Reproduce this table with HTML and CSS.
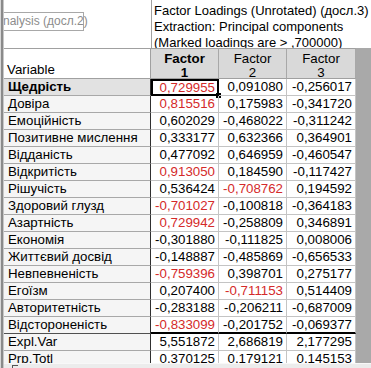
FILE: index.html
```html
<!DOCTYPE html>
<html>
<head>
<meta charset="utf-8">
<link rel="stylesheet" href="styles.css">
</head>
<body>
<div class="window">
  <div class="frame-left"></div>
  <div class="main">
    <div class="sheet">
      <div class="corner"><div class="tooltip">nalysis (досл.2)</div></div>
      <div class="title">Factor Loadings (Unrotated) (досл.3)<br>Extraction: Principal components<br>(Marked loadings are &gt; ,700000)</div>
      <div class="hvar">Variable</div>
      <div class="hcol sel">Factor<br>1</div>
      <div class="hcol">Factor<br>2</div>
      <div class="hcol">Factor<br>3</div>
      <div class="gray"></div>

      <div class="rh selrow">Щедрість</div><div class="c red selcell">0,729955<span class="handle"></span></div><div class="c">0,091080</div><div class="c">-0,256017</div>
      <div class="rh">Довіра</div><div class="c red">0,815516</div><div class="c">0,175983</div><div class="c">-0,341720</div>
      <div class="rh">Емоційність</div><div class="c">0,602029</div><div class="c">-0,468022</div><div class="c">-0,311242</div>
      <div class="rh">Позитивне мислення</div><div class="c">0,333177</div><div class="c">0,632366</div><div class="c">0,364901</div>
      <div class="rh">Відданість</div><div class="c">0,477092</div><div class="c">0,646959</div><div class="c">-0,460547</div>
      <div class="rh">Відкритість</div><div class="c red">0,913050</div><div class="c">0,184590</div><div class="c">-0,117427</div>
      <div class="rh">Рішучість</div><div class="c">0,536424</div><div class="c red">-0,708762</div><div class="c">0,194592</div>
      <div class="rh">Здоровий глузд</div><div class="c red">-0,701027</div><div class="c">-0,100818</div><div class="c">-0,364183</div>
      <div class="rh">Азартність</div><div class="c red">0,729942</div><div class="c">-0,258809</div><div class="c">0,346891</div>
      <div class="rh">Економія</div><div class="c">-0,301880</div><div class="c">-0,111825</div><div class="c">0,008006</div>
      <div class="rh">Життєвий досвід</div><div class="c">-0,148887</div><div class="c">-0,485869</div><div class="c">-0,656533</div>
      <div class="rh">Невпевненість</div><div class="c red">-0,759396</div><div class="c">0,398701</div><div class="c">0,275177</div>
      <div class="rh">Егоїзм</div><div class="c">0,207400</div><div class="c red">-0,711153</div><div class="c">0,514409</div>
      <div class="rh">Авторитетність</div><div class="c">-0,283188</div><div class="c">-0,206211</div><div class="c">-0,687009</div>
      <div class="rh last">Відстороненість</div><div class="c red last">-0,833099</div><div class="c last">-0,201752</div><div class="c last">-0,069377</div>
      <div class="rh">Expl.Var</div><div class="c">5,551872</div><div class="c">2,686819</div><div class="c">2,177295</div>
      <div class="rh">Prp.Totl</div><div class="c">0,370125</div><div class="c">0,179121</div><div class="c">0,145153</div>
    </div>
    <div class="hscroll"><span class="arrow"></span></div>
  </div>
</div>
</body>
</html>
```
FILE: styles.css
```css
* { box-sizing: border-box; }
html, body { margin: 0; padding: 0; background: #fff; }
body { font-family: "Liberation Sans", Arial, sans-serif; font-size: 13.3px; color: #000; }

.window { display: flex; width: 371px; height: 368px; overflow: hidden; }
.frame-left {
  width: 4px; flex: none;
  background: linear-gradient(to right, #d8d8d8 0 1px, #8a8a8a 1px 3px, #c8c8c8 3px 4px);
}
.main { flex: 1; display: flex; flex-direction: column; min-width: 0; }
.sheet {
  height: 363px; overflow: hidden;
  display: grid;
  grid-template-columns: 147px 68px 68px 69px 15px;
  grid-template-rows: 48px 31px repeat(17, 17px);
}
.corner { position: relative; background: #fff; }
.tooltip {
  position: absolute; left: -4px; top: 12px; width: 84px; height: 19px;
  border: 1px solid #a8a8a8; background: #fff; color: #8c8c8c;
  padding: 1px 0 0 2px; white-space: nowrap; line-height: 15px; font-size: 12px;
}
.title {
  grid-column: 2 / 6; border-left: 1px solid #a0a0a0; font-size: 13px;
  padding: 3px 0 0 2px; line-height: 16px; white-space: nowrap;
}
.hvar {
  display: flex; align-items: flex-end; padding: 0 0 1px 3px;
  border-right: 1px solid #a0a0a0; border-bottom: 1px solid #a0a0a0; border-top: 1px solid #a0a0a0;
  line-height: 15px;
}
.hcol {
  background: #d9d9d9; text-align: center; line-height: 14px; padding-top: 3px;
  border-right: 1px solid #a8a8a8; border-bottom: 1px solid #a0a0a0; border-top: 1px solid #a0a0a0;
  overflow: hidden;
}
.hcol.sel { font-weight: bold; }
.gray { grid-row: 2 / 20; grid-column: 5; background: #a9a9a9; }
.rh {
  background: #f5f5f5; padding: 0 0 0 4px; line-height: 16px; white-space: nowrap;
  border-bottom: 1px solid #a8a8a8; border-right: 1px solid #303030;
}
.rh.selrow { background: #e2e2e2; font-weight: bold; }
.rh.last { border-bottom: 1px solid #505050; }
.c {
  text-align: right; padding-right: 3px; line-height: 16px; position: relative;
  border-right: 1px solid #c4c4c4; border-bottom: 1px solid #c4c4c4;
}
.c.last { border-bottom: 2px solid #000; line-height: 15px; }
.red { color: #d42a2a; }
.selcell { border: 2px solid #000; line-height: 13px; padding-right: 2px; }
.handle {
  position: absolute; right: -4px; bottom: -4px; width: 5px; height: 5px; background: #000;
}
.hscroll { height: 5px; background: #ececec; border-top: 1px solid #f8f8f8; position: relative; }
.arrow { position: absolute; left: 8px; top: 1px; width: 6px; height: 4px; border-left: 1px solid #555; border-top: 1px solid #555; }
```
